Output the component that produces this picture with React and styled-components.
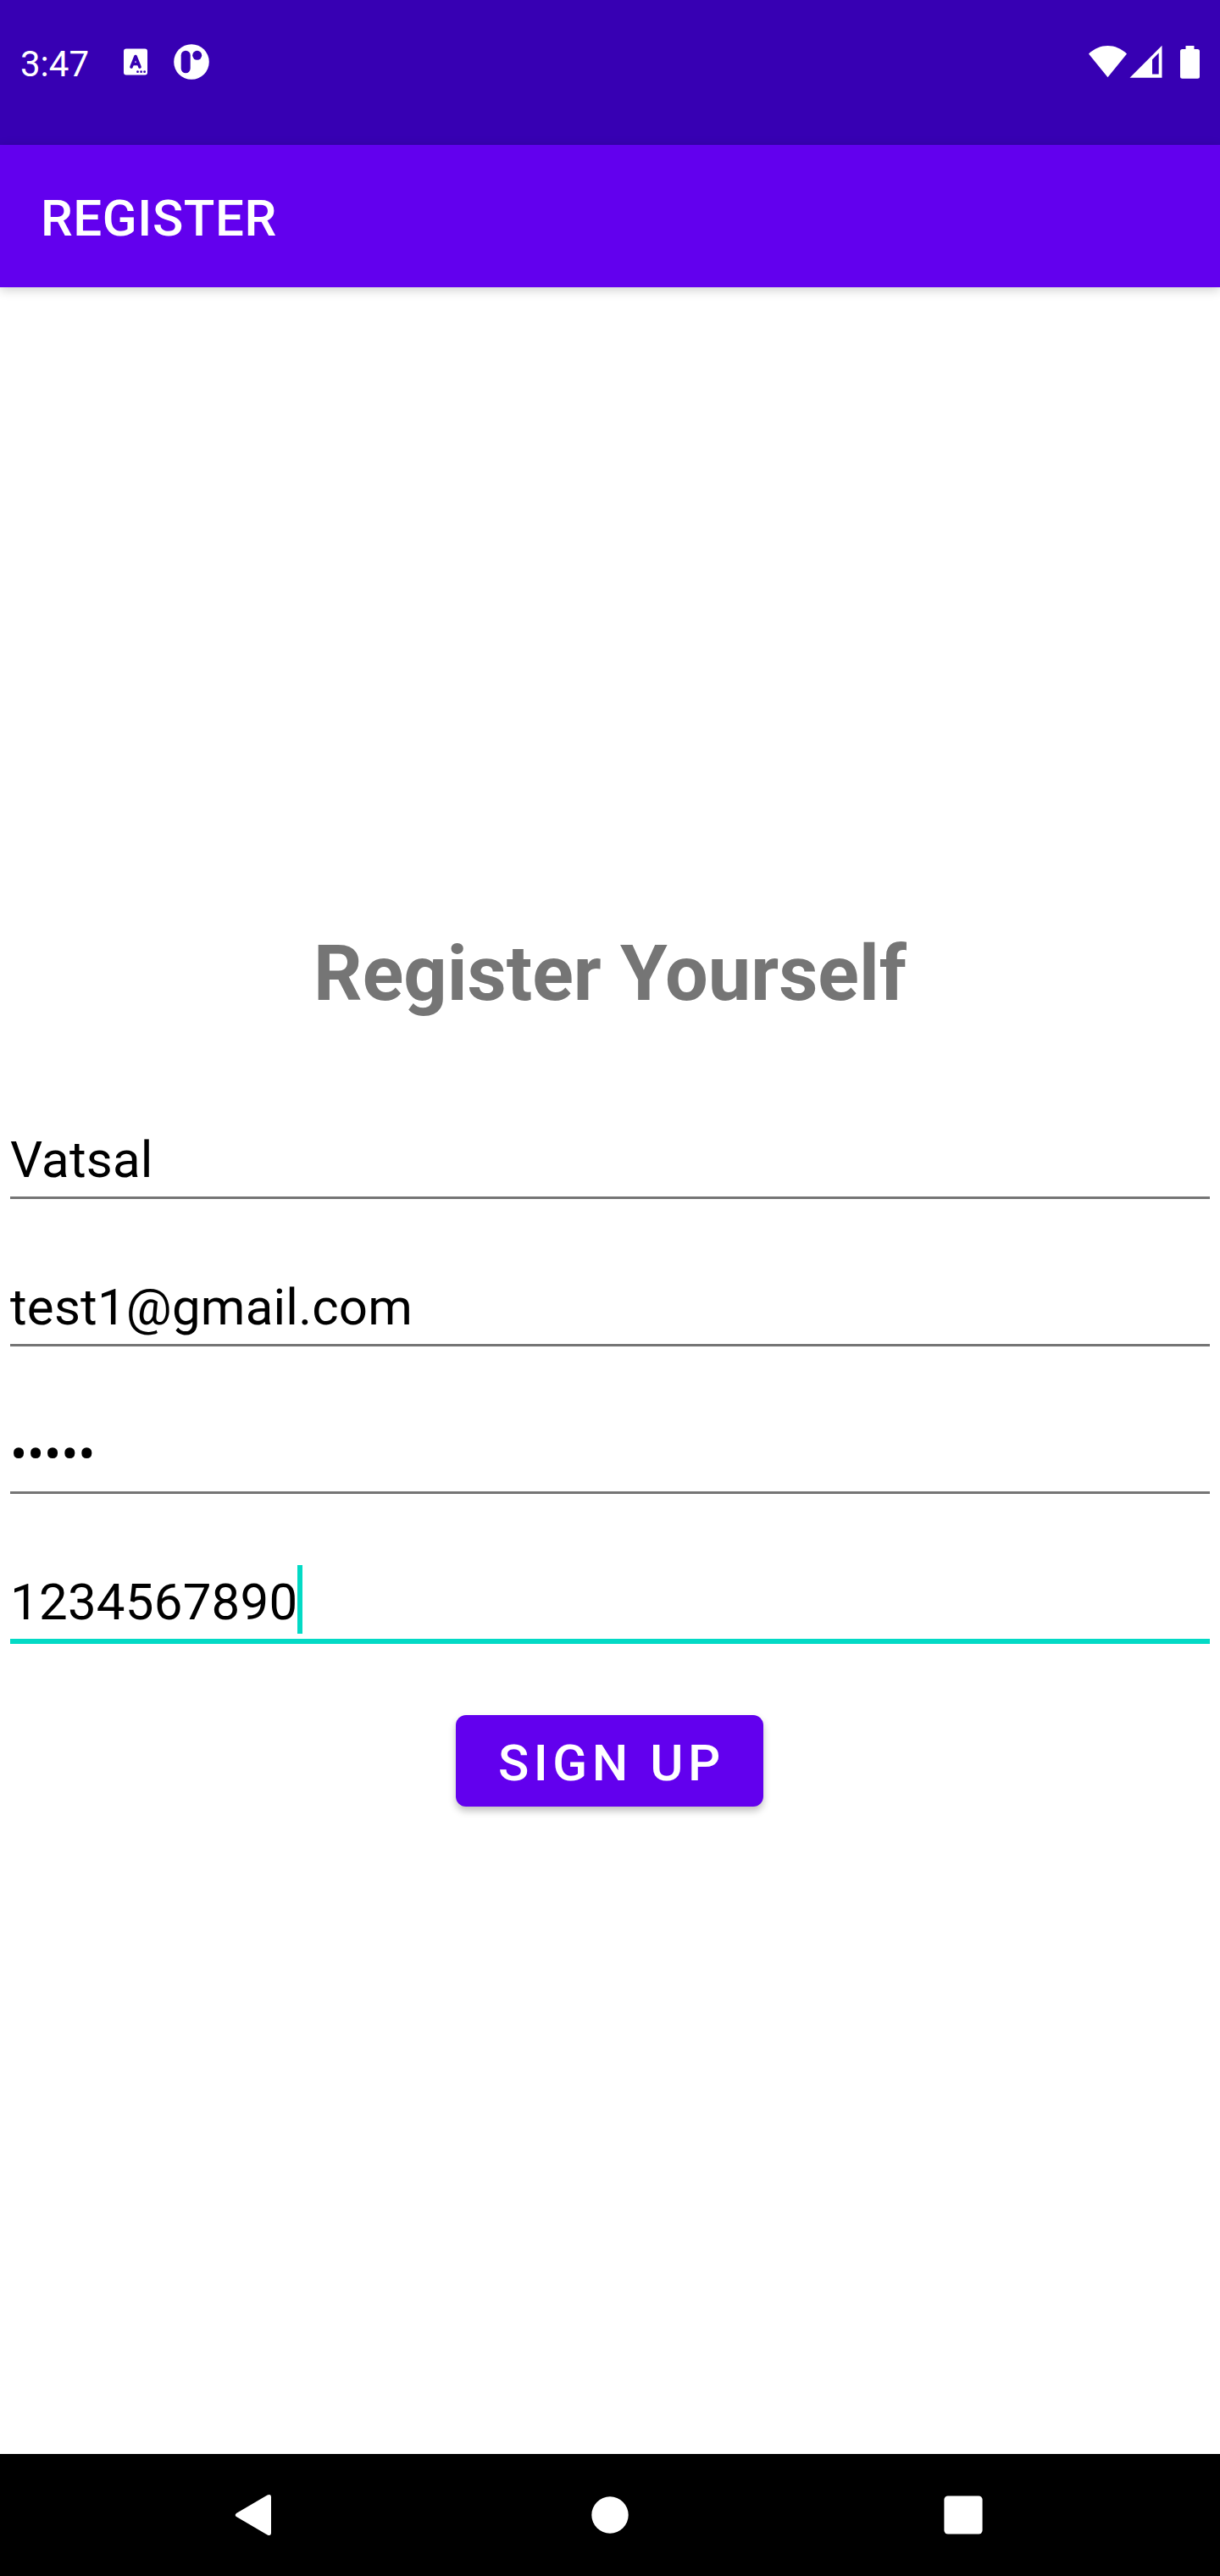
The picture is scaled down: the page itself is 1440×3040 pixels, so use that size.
import React from "react";
import styled, { createGlobalStyle } from "styled-components";

const GlobalStyle = createGlobalStyle`
  * { box-sizing: border-box; }
  body { margin: 0; background: #fff; font-family: Roboto, "Noto Sans", sans-serif; }
`;

const Screen = styled.div`
  width: 1440px;
  height: 3040px;
  display: flex;
  flex-direction: column;
  background: #fff;
  overflow: hidden;
`;

const StatusBar = styled.header`
  height: 171px;
  flex: none;
  display: flex;
  justify-content: space-between;
  padding: 48px 24px 0;
  background: #3700b3;
`;

const StatusGroup = styled.div`
  display: flex;
  height: 50px;
`;

const Clock = styled.span`
  width: 116px;
  color: #fff;
  font-size: 42px;
  line-height: 49px;
  padding-top: 3px;
  white-space: nowrap;
`;

const AppBar = styled.div`
  height: 168px;
  flex: none;
  display: flex;
  align-items: center;
  padding: 5px 48px 0;
  background: #6200ee;
  box-shadow: 0 3px 12px rgba(0, 0, 0, 0.2);
`;

const AppTitle = styled.h1`
  margin: 0;
  color: #fff;
  font-size: 60px;
  font-weight: 500;
  line-height: 71px;
  letter-spacing: 0.6px;
`;

const Content = styled.main`
  flex: 1;
  display: flex;
  flex-direction: column;
  align-items: center;
  padding: 758px 12px 0;
`;

const Heading = styled.h2`
  margin: 0 0 91px;
  color: #757575;
  font-size: 90px;
  font-weight: 700;
  line-height: 106px;
  white-space: nowrap;
`;

const Form = styled.form`
  width: 100%;
  display: flex;
  flex-direction: column;
  align-items: center;
`;

const Field = styled.div`
  width: 100%;
  height: 174px;
  display: flex;
  flex-direction: column;
`;

const Value = styled.div`
  height: 81px;
  margin-top: 31px;
  display: flex;
  color: #000;
  font-size: 60px;
  line-height: 87px;
  letter-spacing: ${(p) => (p.$masked ? "-0.2px" : "0.22px")};
`;

const Caret = styled.span`
  width: 6px;
  height: 81px;
  background: #03dac5;
`;

const Underline = styled.div`
  height: ${(p) => (p.$active ? 6 : 3)}px;
  margin-top: 6px;
  flex: none;
  background: ${(p) => (p.$active ? "#03dac5" : "#757575")};
`;

const SignUpButton = styled.button`
  width: 363px;
  height: 108px;
  margin: 34px 0 0 -1px;
  padding: 21px 0 16px 50px;
  border: 0;
  border-radius: 12px;
  background: #6200ee;
  color: #fff;
  font: 500 60px/71px Roboto, sans-serif;
  letter-spacing: 5.5px;
  text-align: left;
  white-space: nowrap;
  box-shadow: 0 5px 8px rgba(0, 0, 0, 0.25);
`;

const NavBar = styled.nav`
  height: 144px;
  flex: none;
  display: flex;
  justify-content: center;
  align-items: center;
  gap: 345px;
  background: #000;
`;

const Icon = styled.svg`
  display: block;
  flex: none;
`;

const StatusNotifications = () => (
  <Icon width="112" height="50" viewBox="140 48 112 50" fill="#fff">
    <rect x="146" y="57.5" width="28" height="31" rx="3" />
    <path d="M155 79 L160 66.5 L165 79 M157 75.5 H163" fill="none" stroke="#3700b3" strokeWidth="3.6" strokeLinecap="round" strokeLinejoin="round" />
    <g fill="#3700b3">
      <circle cx="162.5" cy="84.7" r="1.4" />
      <circle cx="166.6" cy="84.7" r="1.4" />
      <circle cx="170.6" cy="84.7" r="1.4" />
    </g>
    <circle cx="226" cy="73" r="20.8" />
    <rect x="213.7" y="59.7" width="11" height="26.6" rx="5.5" fill="#3700b3" />
    <circle cx="232.7" cy="65.3" r="5.5" fill="#3700b3" />
  </Icon>
);

const StatusSystem = () => (
  <Icon width="140" height="50" viewBox="1276 48 140 50" fill="#fff">
    <path d="M1307.5 91.2 L1285 63.5 C1298 50.7 1317 50.7 1330 63.5 Z" />
    <path fillRule="evenodd" d="M1333.5 91.7 L1371.5 53.7 V91.7 Z M1360 70.3 V87.5 H1367.7 V62.6 Z" />
    <path d="M1399.5 54 H1409.5 V58 H1413.5 Q1416 58 1416 60.5 V90.2 Q1416 92.7 1413.5 92.7 H1395.5 Q1393 92.7 1393 90.2 V60.5 Q1393 58 1395.5 58 H1399.5 Z" />
  </Icon>
);

const fields = [
  { value: "Vatsal" },
  { value: "test1@gmail.com" },
  { value: "•••••", masked: true },
  { value: "1234567890", active: true },
];

export default function App() {
  return (
    <>
      <GlobalStyle />
      <Screen>
        <StatusBar>
          <StatusGroup>
            <Clock>3:47</Clock>
            <StatusNotifications />
          </StatusGroup>
          <StatusGroup>
            <StatusSystem />
          </StatusGroup>
        </StatusBar>
        <AppBar>
          <AppTitle>REGISTER</AppTitle>
        </AppBar>
        <Content>
          <Heading>Register Yourself</Heading>
          <Form>
            {fields.map((f) => (
              <Field key={f.value}>
                <Value $masked={f.masked}>
                  {f.value}
                  {f.active && <Caret />}
                </Value>
                <Underline $active={f.active} />
              </Field>
            ))}
            <SignUpButton type="button">SIGN UP</SignUpButton>
          </Form>
        </Content>
        <NavBar>
          <Icon width="72" height="72" viewBox="4 0 72 72">
            <path d="M16.8 33.4 Q12.6 36 16.8 38.6 L52.6 59.6 Q57 61.4 57 56.8 V15.2 Q57 10.6 52.6 12.4 Z" fill="#fff" />
          </Icon>
          <Icon width="72" height="72" viewBox="0 0 72 72">
            <circle cx="36" cy="36" r="21.7" fill="#fff" />
          </Icon>
          <Icon width="72" height="72" viewBox="0 0 72 72">
            <rect x="13.4" y="13.4" width="45.2" height="45.2" rx="4.5" fill="#fff" />
          </Icon>
        </NavBar>
      </Screen>
    </>
  );
}
